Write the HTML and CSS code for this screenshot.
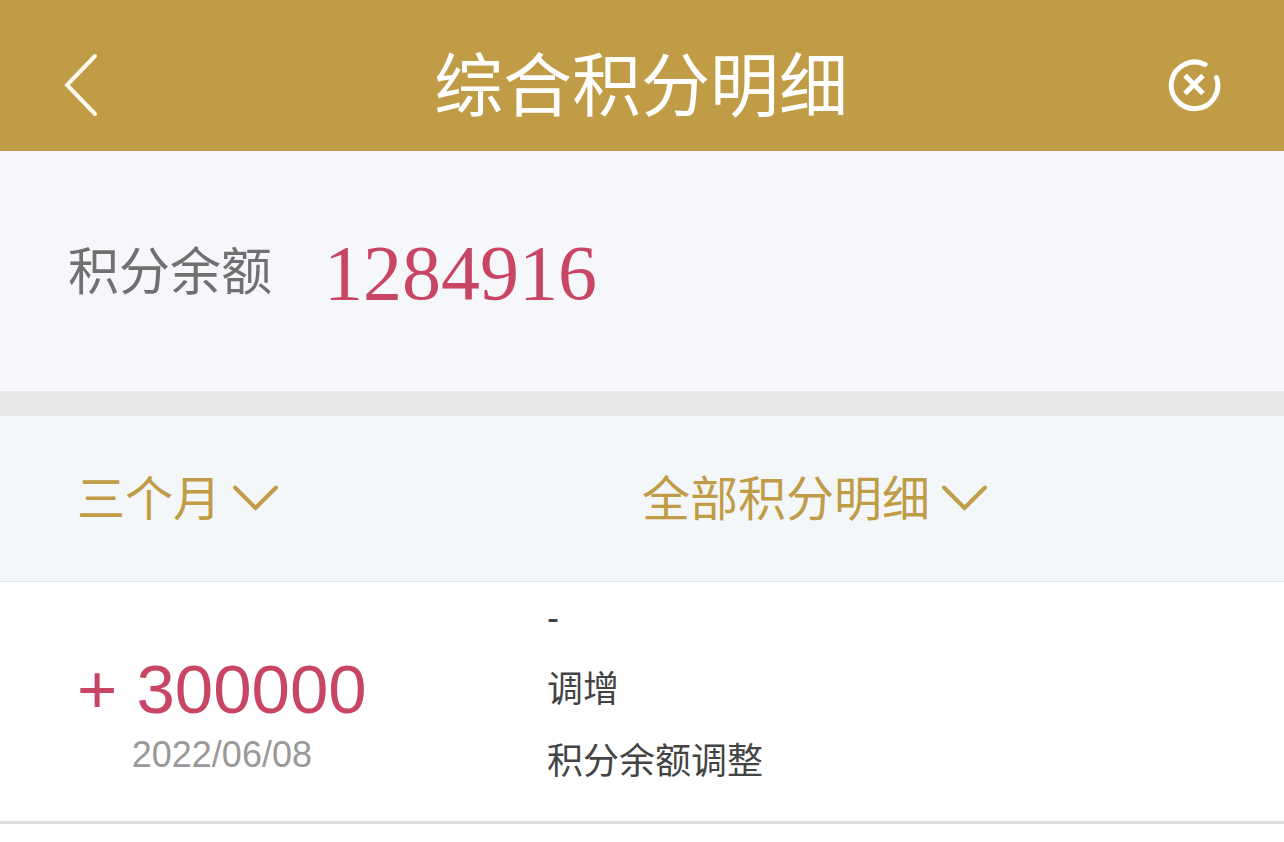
FILE: index.html
```html
<!DOCTYPE html>
<html lang="zh-CN">
<head>
<meta charset="utf-8">
<meta name="viewport" content="width=device-width, initial-scale=1">
<title>综合积分明细</title>
<link rel="stylesheet" href="styles.css">
</head>
<body>
<header class="topbar">
  <button class="icon-button" type="button" aria-label="返回">
    <svg width="40" height="68" viewBox="0 0 40 68" fill="none" stroke="#fffaf0" stroke-width="4" stroke-linecap="round"><path d="M35 5 7 34 35 63"/></svg>
  </button>
  <h1 class="title">综合积分明细</h1>
  <button class="icon-button icon-button-end" type="button" aria-label="关闭">
    <svg width="56" height="56" viewBox="0 0 56 56" fill="none" stroke="#fff" stroke-width="5"><path stroke-linecap="round" d="M39 7.500A23.300 23.300 0 1 0 50.500 20.500"/><path stroke-width="5" d="M19 18.500 37 36.500M37 18.500 19 36.500"/></svg>
  </button>
</header>
<main>
  <section class="balance">
    <span class="balance-label">积分余额</span>
    <strong class="balance-value">1284916</strong>
  </section>
  <form class="filters">
    <div class="filter">
      <select class="filter-select" aria-label="三个月"><option>三个月</option></select>
      <svg class="chevron" width="48" height="30" viewBox="0 0 48 30" fill="none" stroke="#c19c46" stroke-width="4" stroke-linecap="round"><path d="M3 4.500 23.500 25 44 4.500"/></svg>
    </div>
    <div class="filter">
      <select class="filter-select" aria-label="全部积分明细"><option>全部积分明细</option></select>
      <svg class="chevron" width="48" height="30" viewBox="0 0 48 30" fill="none" stroke="#c19c46" stroke-width="4" stroke-linecap="round"><path d="M3 4.500 23.500 25 44 4.500"/></svg>
    </div>
  </form>
  <ul class="records">
    <li class="record">
      <div class="record-sum">
        <span class="amount">+ 300000</span>
        <time class="date" datetime="2022-06-08">2022/06/08</time>
      </div>
      <div class="record-info">
        <p>-</p>
        <p>调增</p>
        <p>积分余额调整</p>
      </div>
    </li>
  </ul>
</main>
</body>
</html>
```

FILE: styles.css
```css
* {
  box-sizing: border-box;
}

body {
  margin: 0;
  background: #fff;
  color: #444;
  font-family: "Liberation Sans", "Noto Sans CJK SC", sans-serif;
}

.topbar {
  display: grid;
  grid-template-columns: 1fr auto 1fr;
  align-items: center;
  padding: 32px 62px 13px 60px;
  background: #c19c46;
  color: #fff;
}

.icon-button {
  display: flex;
  justify-self: start;
  margin: 0;
  padding: 0;
  border: 0;
  background: none;
}

.icon-button-end {
  justify-self: end;
}

.title {
  margin: 0;
  padding-top: 6px;
  font-size: 69px;
  font-weight: 400;
  line-height: 100px;
}

.balance {
  display: flex;
  align-items: center;
  gap: 52px;
  padding: 72px 68px 68px;
  border-bottom: 25px solid #e6e7e8;
  background: #f6f7fb;
}

.balance-label {
  color: #707070;
  font-size: 51px;
  line-height: 100px;
}

.balance-value {
  color: #c84664;
  font-family: "Liberation Serif", serif;
  font-size: 78px;
  font-weight: 400;
  line-height: 100px;
}

.filters {
  display: grid;
  grid-template-columns: 1fr 1fr;
  border-bottom: 1px solid #e6e9eb;
  background: #f3f7fa;
}

.filter {
  position: relative;
  justify-self: start;
  padding: 43px 0 42px;
}

.filter:first-child {
  margin-left: 77px;
}

.filter-select {
  display: block;
  height: 80px;
  margin: 0;
  padding: 0 58px 0 0;
  border: 0;
  appearance: none;
  background: none;
  color: #c19c46;
  font-family: inherit;
  font-size: 48px;
  font-weight: 400;
}

.chevron {
  position: absolute;
  top: 67px;
  right: 0;
  pointer-events: none;
}

.records {
  margin: 0;
  padding: 0;
  list-style: none;
}

.record {
  display: grid;
  grid-template-columns: 547fr 737fr;
  padding-bottom: 23px;
  border-bottom: 3px solid #dcdcdc;
}

.record-sum {
  display: flex;
  flex-direction: column;
  align-items: center;
  justify-self: start;
  padding: 68px 0 0 77px;
}

.amount {
  color: #c84664;
  font-size: 69px;
  line-height: 80px;
}

.date {
  color: #999;
  font-size: 36px;
  line-height: 50px;
}

.record-info p {
  margin: 0;
  font-size: 36px;
  line-height: 72px;
}
```
